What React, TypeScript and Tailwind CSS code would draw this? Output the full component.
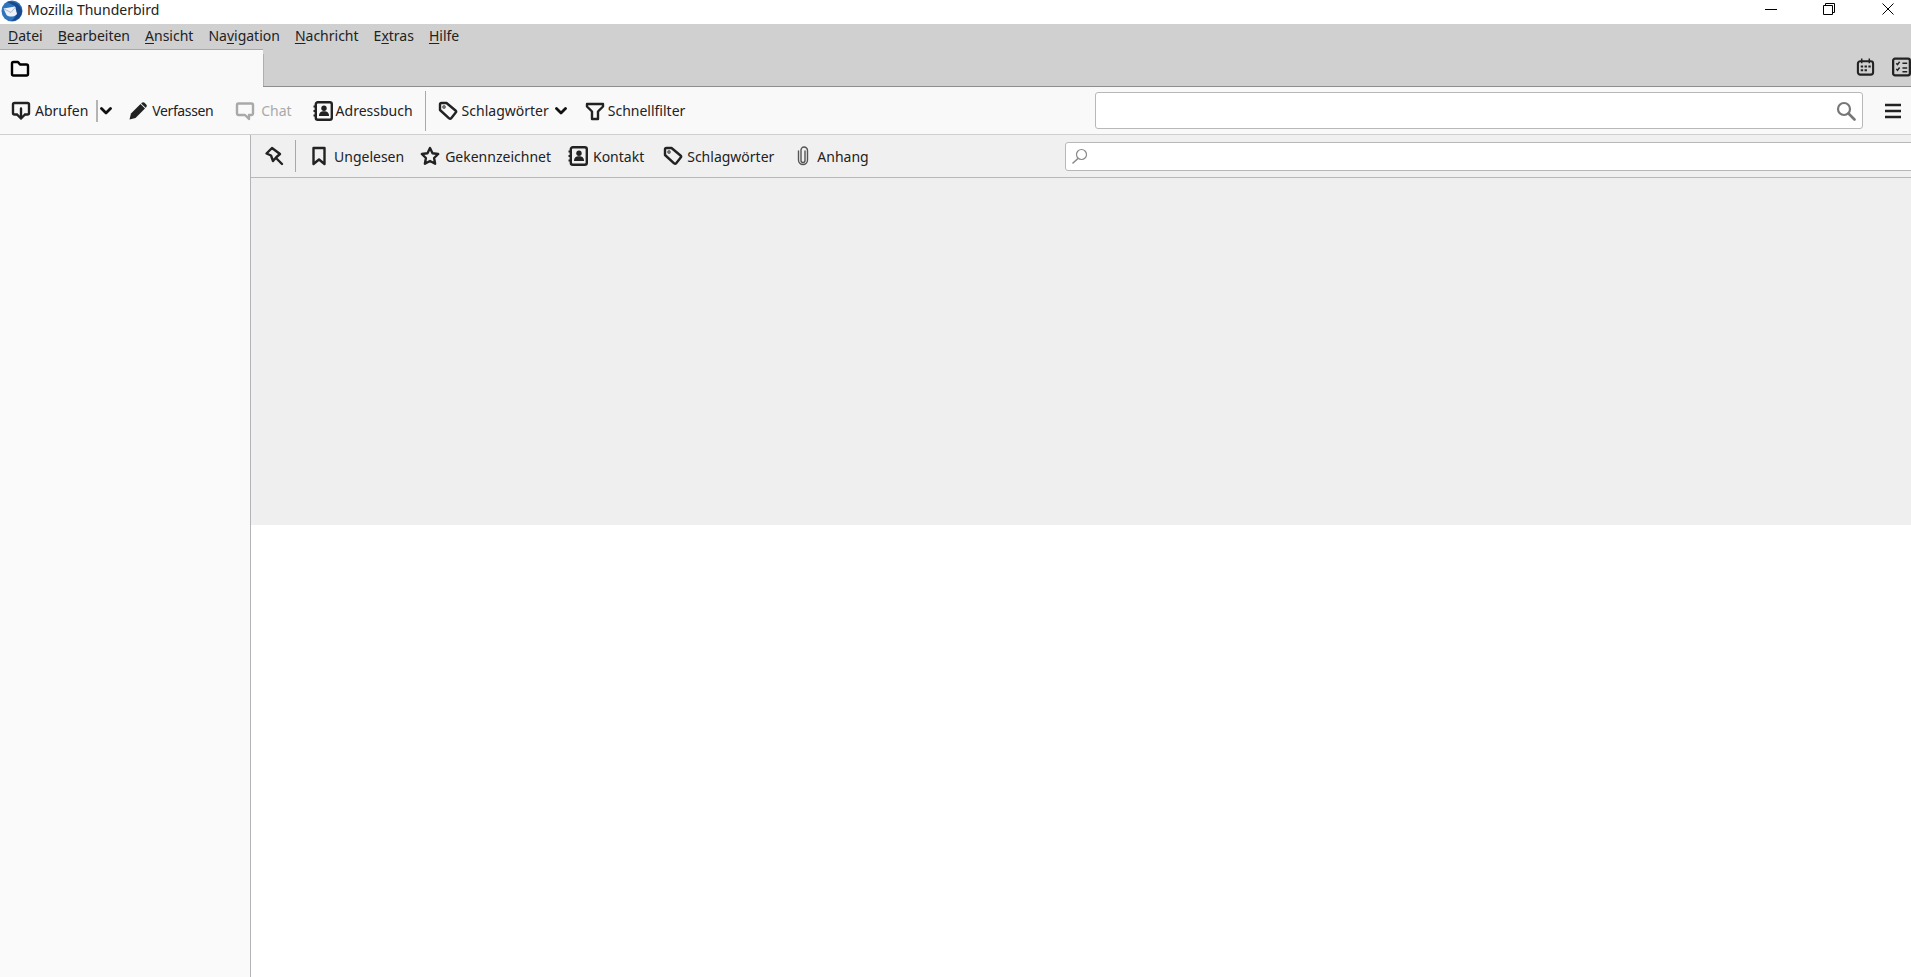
import { ReactNode } from "react"

const menus: [string, string, string][] = [
  ["", "D", "atei"],
  ["", "B", "earbeiten"],
  ["", "A", "nsicht"],
  ["Na", "v", "igation"],
  ["", "N", "achricht"],
  ["E", "x", "tras"],
  ["", "H", "ilfe"],
]

const Icon = ({ children, className = "w-5 h-5" }: { children: ReactNode, className?: string }) => (
  <svg viewBox="0 0 20 20" fill="none" stroke="#222" strokeWidth="2.4" strokeLinejoin="round" strokeLinecap="round" className={`${className} shrink-0`}>
    {children}
  </svg>
)

const Logo = () => (
  <svg viewBox="0 0 22 22" className="w-[22px] h-[22px] shrink-0">
    <circle cx="11" cy="11" r="10.5" fill="#2f74bd" />
    <path d="M6 2 C12 0 20 4 21 11 C21 17 15 21.500 10 21 C15 18 17 13 14 6 Z" fill="#17498c" />
    <path d="M2.500 8.500 L14 6.500 L16 14 C13 17.500 8 17 5.500 15 Z" fill="#eef2f7" />
    <path d="M3 9 L10 12.500 L14.500 7" stroke="#a7bbd4" strokeWidth="1" fill="none" />
  </svg>
)

const GetMail = () => (
  <Icon>
    <path d="M6 13.500H3.500A1.500 1.500 0 0 1 2 12V3.500A1.500 1.500 0 0 1 3.500 2h13A1.500 1.500 0 0 1 18 3.500V12a1.500 1.500 0 0 1-1.500 1.500H14" />
    <path d="M10 7.500v10M6.500 14l3.500 3.500 3.500-3.500" />
  </Icon>
)

const Chevron = ({ className = "w-3 h-3" }: { className?: string }) => (
  <svg viewBox="0 0 12 12" fill="none" stroke="#111" strokeWidth="2.800" strokeLinecap="round" strokeLinejoin="round" className={`${className} shrink-0`}>
    <path d="M1.500 3.500 6 8l4.500-4.500" />
  </svg>
)

const Pencil = () => (
  <svg viewBox="0 0 20 20" className="w-5 h-5 shrink-0" fill="#222">
    <path d="M1.500 18.500 3 12.500 12.500 3l4.500 4.500L7.500 17z" />
    <path d="M13.800 1.800c.8-.8 2-.8 2.700 0l1.700 1.700c.8.7.8 1.900 0 2.700l-.6.6-4.400-4.400z" />
  </svg>
)

const ChatBubble = () => (
  <svg viewBox="0 0 20 20" fill="none" stroke="#a9a9ab" strokeWidth="2.400" strokeLinejoin="round" className="w-5 h-5 shrink-0">
    <path d="M3.500 2.500h13A1.500 1.500 0 0 1 18 4v8.500a1.500 1.500 0 0 1-1.500 1.500H14v4l-4-4H3.500A1.500 1.500 0 0 1 2 12.500V4a1.500 1.500 0 0 1 1.500-1.500z" />
  </svg>
)

const AddressBook = () => (
  <svg viewBox="0 0 20 20" className="w-5 h-5 shrink-0">
    <rect x="2.800" y="1.200" width="16" height="17.600" rx="2" fill="none" stroke="#222" strokeWidth="2.400" />
    <path d="M0.500 5.500h3.500M0.500 10h3.500M0.500 14.500h3.500" stroke="#222" strokeWidth="1.800" />
    <circle cx="11" cy="7.300" r="2.700" fill="#222" />
    <path d="M6 15c0-3.500 2-4.800 5-4.800s5 1.300 5 4.800z" fill="#222" />
  </svg>
)

const Tag = () => (
  <Icon>
    <path d="M2 3.500A1.500 1.500 0 0 1 3.500 2H8.500l9 7.500a1.500 1.500 0 0 1 .2 2.100l-4.500 5.600a1.500 1.500 0 0 1-2.100.2L2 9z" />
    <circle cx="6" cy="6" r="0.500" />
  </Icon>
)

const Funnel = () => (
  <Icon>
    <path d="M2 3h16v2.500l-5 5V18H7v-7.500l-5-5z" />
  </Icon>
)

const Pin = () => (
  <Icon>
    <path d="M8 2 2.500 7.500 7 9.500l2 5.500 3.500-4L16 8z" />
    <path d="m12 12 6 6" />
  </Icon>
)

const Bookmark = () => (
  <Icon>
    <path d="M4.500 2h11v16L10 13.500 4.500 18z" />
  </Icon>
)

const Star = () => (
  <Icon>
    <path d="m10 2 2.500 5.200 5.700.8-4.100 4 1 5.700-5.100-2.700-5.100 2.700 1-5.700-4.100-4 5.700-.8z" />
  </Icon>
)

const Clip = () => (
  <svg viewBox="0 0 12 20" fill="none" stroke="#555" strokeWidth="1.400" strokeLinecap="round" className="w-3 h-5 shrink-0">
    <path d="M8 5v9.500a2 2 0 0 1-4 0V4a3 3 0 0 1 3-3h0a3.500 3.500 0 0 1 3.500 3.500V14a4.500 4.500 0 0 1-9 0V5" />
  </svg>
)

const Tool = ({ icon, label, className = "" }: { icon: ReactNode, label: string, className?: string }) => (
  <div className={`flex items-center shrink-0 ${className}`}>
    {icon}
    <span>{label}</span>
  </div>
)

export default function App() {
  return (
    <div className="w-[1911px] h-[977px] flex flex-col overflow-hidden bg-white text-[14px] text-[#1c1c1e] font-['Noto_Sans','Liberation_Sans',sans-serif]">
      {/* title bar */}
      <div className="h-6 flex items-center shrink-0 bg-white">
        <div className="ml-[1px] -mt-[3px]"><Logo /></div>
        <span className="ml-[4px] -mt-[5px] text-[14px] text-[#222]">Mozilla Thunderbird</span>
        <div className="ml-auto flex items-center pr-[17px] -mt-[7px] text-black">
          <svg viewBox="0 0 12 12" className="w-3 h-3" stroke="currentColor" fill="none"><path d="M0 6.500h12" /></svg>
          <svg viewBox="0 0 12 12" className="w-3 h-3 ml-[46px]" stroke="currentColor" fill="none"><path d="M.5 2.500h9v9h-9zM2.500 2.500v-2h9v9h-2" /></svg>
          <svg viewBox="0 0 12 12" className="w-3 h-3 ml-[47px]" stroke="currentColor" fill="none"><path d="m.5.500 11 11M11.500.500l-11 11" /></svg>
        </div>
      </div>

      {/* menu bar */}
      <div className="h-[25px] shrink-0 flex items-center gap-[15px] pl-2 pb-[2px] bg-[#d0d0d0] text-[14px] text-[#222]">
        {menus.map(([before, key, after]) => (
          <span key={before + key + after}>{before}<u className="underline-offset-2">{key}</u>{after}</span>
        ))}
      </div>

      {/* tab bar */}
      <div className="h-[38px] shrink-0 flex bg-[#d0d0d0] border-b border-[#8f8f8f]">
        <div className="w-[263px] h-[38px] bg-[#f9f9fa] border-t border-[#a8a8a8] flex items-center pl-[10px]">
          <svg viewBox="0 0 20 20" fill="none" stroke="#000" strokeWidth="2.400" strokeLinejoin="round" className="w-5 h-5">
            <path d="M2 4.500A1.500 1.500 0 0 1 3.500 3H8l2 2.500h6.500A1.500 1.500 0 0 1 18 7v8a1.500 1.500 0 0 1-1.500 1.500h-13A1.500 1.500 0 0 1 2 15z" />
          </svg>
        </div>
        <div className="w-px h-8 mt-[5px] bg-[#b0b0b0]" />
        <div className="ml-auto flex items-center gap-[17px] pb-[1px] pr-[1px] text-[#222]">
          <svg viewBox="0 0 20 20" fill="none" stroke="currentColor" strokeWidth="2.200" className="w-[19px] h-[20px]">
            <rect x="2" y="4" width="16" height="14" rx="2.500" />
            <path d="M6 1v5M14 1v5" strokeWidth="1.600" />
            <path d="M5 9.500h2.500M9 9.500h2.500M13 9.500h2.500M5 13.500h2.500M9 13.500h2.500" />
          </svg>
          <svg viewBox="0 0 20 20" fill="none" stroke="currentColor" className="w-[19px] h-[20px] -mr-[1px]">
            <rect x="1.200" y="1.200" width="17.600" height="17.600" rx="2" strokeWidth="2.400" />
            <path d="m4.500 6 1.300 1.500L8 4.500M4.500 12l1.300 1.500L8 10.500M11 6h5M11 11h5M11 15h5" strokeWidth="1.500" />
          </svg>
        </div>
      </div>

      {/* main toolbar */}
      <div className="h-[48px] shrink-0 flex items-center bg-[#f9f9fa] border-b border-[#cfcfd2] pl-[11px] text-[14px] text-[#222]">
        <Tool icon={<GetMail />} label="Abrufen" className="gap-[4px]" />
        <div className="w-[2px] h-[22px] bg-[#b4b4b4] ml-[8px]" />
        <Chevron className="w-3 h-3 ml-[2px]" />
        <Tool icon={<Pencil />} label="Verfassen" className="ml-[16px] gap-[4px] tracking-[-0.4px]" />
        <Tool icon={<ChatBubble />} label="Chat" className="ml-[22px] gap-[6px] text-[#a9a9ab]" />
        <Tool icon={<AddressBook />} label="Adressbuch" className="ml-[21px] gap-[3px]" />
        <div className="w-px h-10 bg-[#a8a8a8] ml-[12px]" />
        <Tool icon={<Tag />} label="Schlagwörter" className="ml-[12px] gap-[4px]" />
        <Chevron className="w-3 h-3 ml-[6px]" />
        <Tool icon={<Funnel />} label="Schnellfilter" className="ml-[18px] gap-[3px]" />
        <div className="ml-auto w-[768px] h-[37px] flex items-center justify-end bg-white border border-[#b8b8b8] rounded-[3px] pr-[6px] text-[#777]">
          <svg viewBox="0 0 20 20" fill="none" stroke="currentColor" strokeWidth="2.200" strokeLinecap="round" className="w-5 h-5">
            <circle cx="8" cy="8" r="6" />
            <path d="m12.500 12.500 6 6" strokeWidth="2.600" />
          </svg>
        </div>
        <div className="w-[48px] flex justify-center pl-[12px] text-[#222]">
          <svg viewBox="0 0 16 16" stroke="currentColor" strokeWidth="2.400" className="w-4 h-4">
            <path d="M0 2h16M0 8h16M0 14h16" />
          </svg>
        </div>
      </div>

      {/* body */}
      <div className="flex-1 flex min-h-0">
        <div className="w-[251px] shrink-0 bg-[#fafafa] border-r border-[#b4b4b8]" />
        <div className="flex-1 min-w-0 flex flex-col overflow-hidden">
          <div className="h-[43px] shrink-0 flex items-center bg-[#f0f0f0] border-b border-[#b8b8b8] pl-[13px] text-[14px] text-[#222]">
            <Pin />
            <div className="w-px h-8 shrink-0 bg-[#a8a8a8] ml-[11px]" />
            <Tool icon={<Bookmark />} label="Ungelesen" className="ml-[13px] gap-[5px]" />
            <Tool icon={<Star />} label="Gekennzeichnet" className="ml-[16px] gap-[5px]" />
            <Tool icon={<AddressBook />} label="Kontakt" className="ml-[17px] gap-[5px]" />
            <Tool icon={<Tag />} label="Schlagwörter" className="ml-[19px] gap-[4px]" />
            <Tool icon={<Clip />} label="Anhang" className="ml-[23px] gap-[8px]" />
            <div className="ml-[196px] w-[900px] h-[29px] shrink-0 flex items-center bg-white border border-[#b8b8b8] rounded-[3px] pl-[6px] text-[#8a8a8a]">
              <svg viewBox="0 0 16 16" fill="none" stroke="currentColor" strokeWidth="1.200" strokeLinecap="round" className="w-4 h-4">
                <circle cx="9.500" cy="6.500" r="5" />
                <path d="M6 10.500 1 15" strokeWidth="1.600" />
              </svg>
            </div>
          </div>
          <div className="h-[347px] shrink-0 bg-[#efefef]" />
          <div className="flex-1 bg-white" />
        </div>
      </div>
    </div>
  )
}
